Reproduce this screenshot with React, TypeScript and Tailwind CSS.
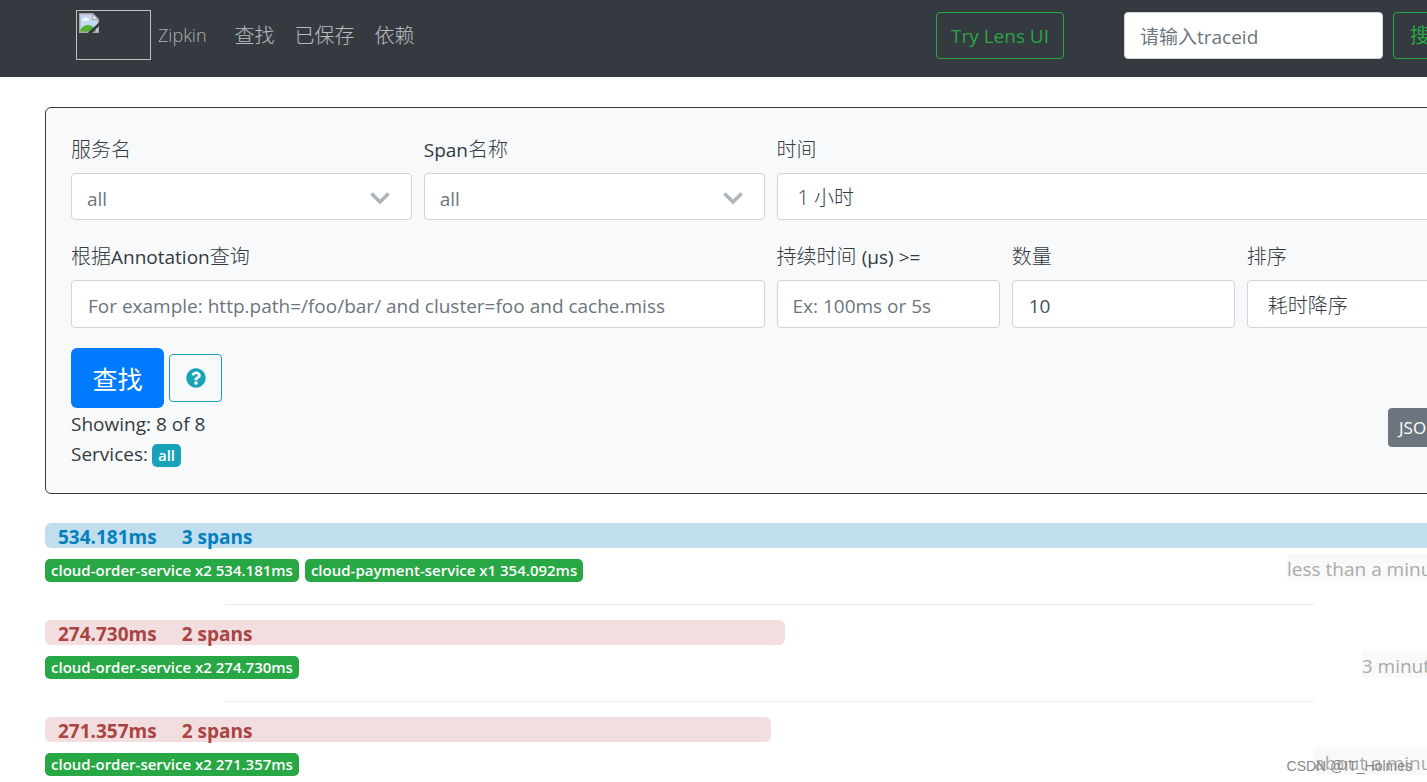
import type { ReactNode } from 'react';
import { FaQuestionCircle } from 'react-icons/fa';

const control =
  'w-full rounded border border-[#ced4da] bg-white placeholder:text-[#6c757d] placeholder:opacity-100';

const badge = 'rounded-[5px] px-[6px] text-[15px] leading-[23px] font-semibold whitespace-nowrap text-white';

const traces = [
  {
    duration: '534.181ms',
    spans: '3 spans',
    percent: 100,
    slow: false,
    services: ['cloud-order-service x2 534.181ms', 'cloud-payment-service x1 354.092ms'],
    age: 'less than a minute ago',
  },
  {
    duration: '274.730ms',
    spans: '2 spans',
    percent: 51,
    slow: true,
    services: ['cloud-order-service x2 274.730ms'],
    age: '3 minutes ago',
  },
  {
    duration: '271.357ms',
    spans: '2 spans',
    percent: 50,
    slow: true,
    services: ['cloud-order-service x2 271.357ms'],
    age: 'about a minute ago',
  },
];

function BrokenImage() {
  return (
    <svg viewBox="0 0 20 20" className="size-5" aria-hidden="true">
      <path d="M.7.7h12.8l5.8 5.8v12.8H.7z" fill="#c6d9f7" />
      <path d="M3 7.500c0-1.300 1-2 2-1.800.500-1.600 2.700-1.600 3.200 0 1.300 0 1.900.8 1.900 1.800z" fill="#fff" />
      <path d="M1 19v-2c2-3.200 5-5 8-5 4 0 7 3 8.500 7z" fill="#57b032" />
      <path d="M.7.7h12.8l5.8 5.800v12.800H.7z" fill="none" stroke="#a9a9a9" strokeWidth="1.4" />
      <path d="M13.500.7v5.800h5.800z" fill="#fff" stroke="#a9a9a9" strokeWidth="1.4" />
      <path d="M20 9.500v3.600L13.200 20H8.600z" fill="#343a40" />
    </svg>
  );
}

function Field({ id, label, className, children }: { id: string; label: ReactNode; className: string; children: ReactNode }) {
  return (
    <div className={className}>
      <label htmlFor={id} className="mb-[10px] block h-[30px] text-xl leading-[33px] font-light">
        {label}
      </label>
      {children}
    </div>
  );
}

function Latin({ children }: { children: ReactNode }) {
  return <span className="text-[19px] font-normal">{children}</span>;
}

function ChosenSelect({ id }: { id: string }) {
  return (
    <div className="relative">
      <select id={id} className={`${control} h-[47px] appearance-none pt-[5px] pl-[15px] text-[19px] text-[#6c757d]`}>
        <option>all</option>
      </select>
      <svg viewBox="0 0 20 13" className="pointer-events-none absolute top-[19px] right-[22px] h-[13px] w-5" aria-hidden="true">
        <path d="M1.4 1.4L10 10l8.600-8.600" fill="none" stroke="#adb5bd" strokeWidth="3.6" />
      </svg>
    </div>
  );
}

export default function App() {
  return (
    <div className="relative h-screen overflow-hidden bg-white font-['Open_Sans','Noto_Sans_CJK_SC',sans-serif] text-[19px] text-[#343a40]">
      <div className="w-[calc(100%+114px)]">
        <nav className="flex h-[77px] items-start bg-[#343a40] pt-[10px] pr-[74px] pl-[76px]">
          <a href="#home" className="flex items-center gap-[7px] text-lg font-light text-white/60">
            <span className="block h-[50px] w-[75px] border border-[#c0c0c0] p-[2px]">
              <BrokenImage />
            </span>
            Zipkin
          </a>
          <div className="ml-7 flex gap-5 text-xl font-light leading-[52px] text-white/65">
            <a href="#search">查找</a>
            <a href="#saved">已保存</a>
            <a href="#dependency">依赖</a>
          </div>
          <div className="ml-auto flex pt-[2px]">
            <button className="mr-[60px] h-[47px] w-32 rounded border border-[#28a745] pt-[2px] text-[#28a745]">
              Try Lens UI
            </button>
            <input
              aria-label="traceid"
              placeholder="请输入traceid"
              className="mr-[10px] h-[47px] w-[259px] rounded border border-[#ced4da] bg-white px-[15px] pt-[2px] placeholder:text-[#6c757d] placeholder:opacity-100"
            />
            <button className="h-[47px] w-[74px] rounded border border-[#28a745] text-xl text-[#28a745]">搜索</button>
          </div>
        </nav>

        <main className="px-[45px] pt-[30px]">
          <form className="rounded-md border border-[#343a40] bg-[#f8f9fa] p-[25px]">
            <div className="grid grid-cols-12 gap-x-3 gap-y-5">
              <Field id="service" label="服务名" className="col-span-3">
                <ChosenSelect id="service" />
              </Field>
              <Field id="span" label={<><Latin>Span</Latin>名称</>} className="col-span-3">
                <ChosenSelect id="span" />
              </Field>
              <Field id="lookback" label="时间" className="col-span-6">
                <select id="lookback" className={`${control} h-[47px] appearance-none pt-[2px] pl-5 text-xl font-light text-[#343a40]`}>
                  <option>1 小时</option>
                </select>
              </Field>
              <Field id="annotation" label={<>根据<Latin>Annotation</Latin>查询</>} className="col-span-6">
                <input
                  id="annotation"
                  placeholder="For example: http.path=/foo/bar/ and cluster=foo and cache.miss"
                  className={`${control} h-12 px-4 pt-1`}
                />
              </Field>
              <Field id="duration" label={<>持续时间 <Latin>(μs) &gt;=</Latin></>} className="col-span-2">
                <input id="duration" placeholder="Ex: 100ms or 5s" className={`${control} h-12 px-[15px] pt-1`} />
              </Field>
              <Field id="limit" label="数量" className="col-span-2">
                <input id="limit" defaultValue="10" className={`${control} h-12 px-4 pt-1 text-[#495057]`} />
              </Field>
              <Field id="sort" label="排序" className="col-span-2">
                <select id="sort" className={`${control} h-12 appearance-none pt-1 pl-5 text-xl font-light text-[#343a40]`}>
                  <option>耗时降序</option>
                </select>
              </Field>
            </div>

            <div className="mt-5 flex items-center gap-[5px]">
              <button type="button" className="h-[60px] w-[93px] rounded-md bg-[#007bff] pt-[3px] text-[25px] text-white">
                查找
              </button>
              <button
                type="button"
                aria-label="Help"
                className="flex h-12 w-[53px] items-center justify-center rounded border border-[#17a2b8] text-[#17a2b8]"
              >
                <FaQuestionCircle className="size-5" />
              </button>
            </div>
            <div className="flex h-[60px] items-start justify-between leading-[30px]">
              <div className="pt-px">
                <p>Showing: 8 of 8</p>
                <p className="flex items-center gap-1">
                  Services:
                  <span className={`${badge} mt-[2px] bg-[#17a2b8]`}>all</span>
                </p>
              </div>
              <button type="button" className="h-[39px] w-[82px] rounded bg-[#6c757d] pl-[11px] text-left text-[17px] text-white">
                JSON
              </button>
            </div>
          </form>

          <ul className="pt-[29px]">
            {traces.map((trace) => (
              <li key={trace.duration}>
                <div
                  className={`flex h-[25px] gap-[25px] rounded-md pl-[13px] text-[19px] leading-[29px] font-bold ${
                    trace.slow ? 'bg-[#f2dede] text-[#a94442]' : 'bg-[#c1deee] text-[#0480be]'
                  }`}
                  style={{ width: `${trace.percent}%` }}
                >
                  <span>{trace.duration}</span>
                  <span>{trace.spans}</span>
                </div>
                <div className="flex h-[56px] items-start gap-[6px] pt-[11px]">
                  {trace.services.map((service) => (
                    <span key={service} className={`${badge} bg-[#28a745]`}>
                      {service}
                    </span>
                  ))}
                  <span className="-mt-[5px] mr-[9px] ml-auto h-[27px] bg-[#f9f9f9] leading-[30px] text-[#aaa]">
                    {trace.age}
                  </span>
                </div>
                <hr className="mx-auto mb-[15px] w-3/4 border-[#eeeeee]" />
              </li>
            ))}
          </ul>
        </main>
      </div>
      <span className="absolute right-[15px] bottom-[6px] font-['Liberation_Sans',sans-serif] text-sm leading-5 text-[#888]">
        CSDN @IT_Holmes
      </span>
    </div>
  );
}
